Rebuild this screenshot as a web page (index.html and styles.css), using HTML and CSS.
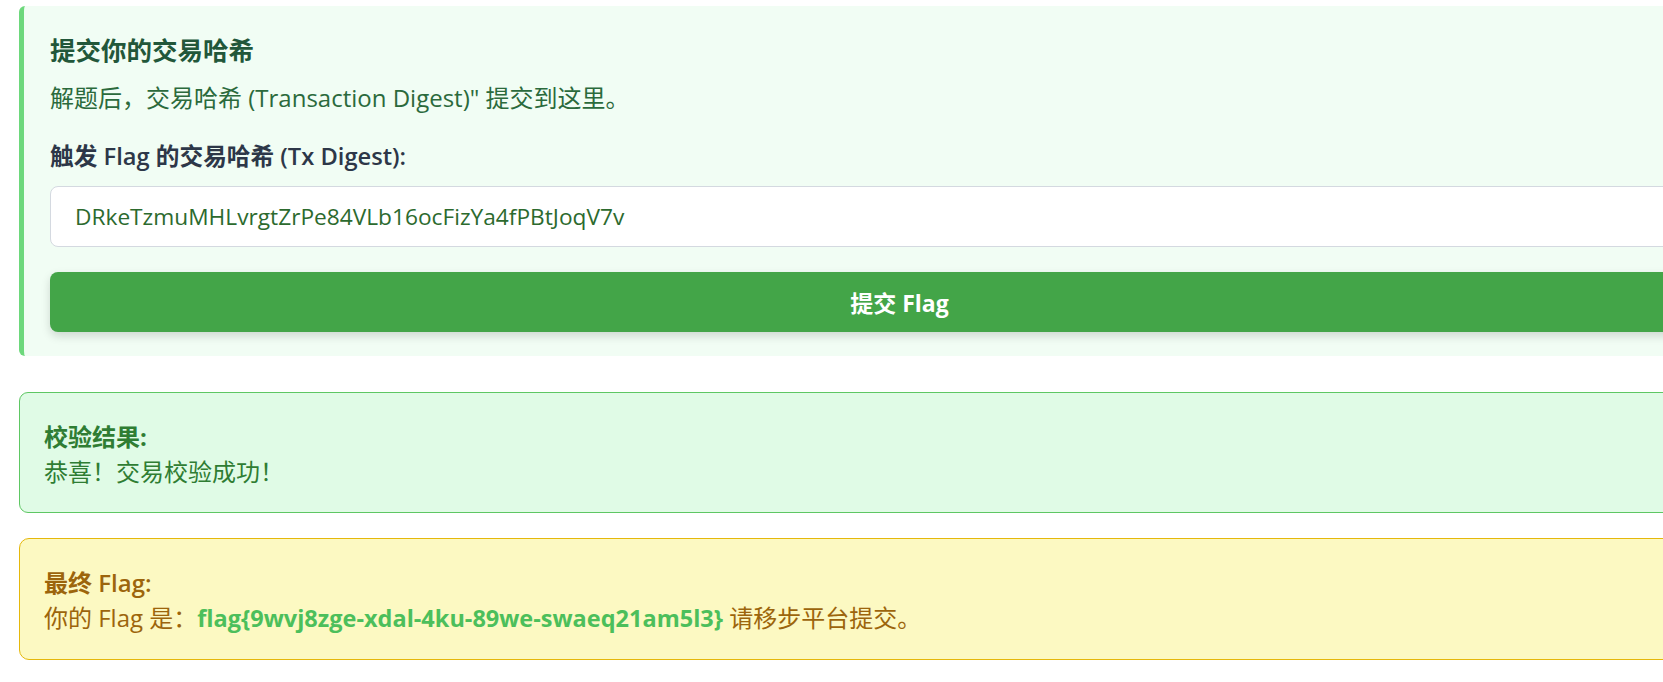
FILE: index.html
```html
<!DOCTYPE html>
<html lang="zh-CN">
<head>
<meta charset="utf-8">
<title>提交 Flag</title>
<link rel="stylesheet" href="styles.css">
</head>
<body>
<div class="page">
  <section class="submit-card">
    <h3 class="submit-title">提交你的交易哈希</h3>
    <p class="submit-desc">解题后，交易哈希 (Transaction Digest)" 提交到这里。</p>
    <label class="field-label" for="tx">触发 Flag 的交易哈希 (Tx Digest):</label>
    <input class="field-input" id="tx" type="text" value="DRkeTzmuMHLvrgtZrPe84VLb16ocFizYa4fPBtJoqV7v">
    <button class="submit-btn" type="button">提交 Flag</button>
  </section>

  <div class="result-box">
    <strong class="result-title">校验结果:</strong><br>
    <span>恭喜！交易校验成功！</span>
  </div>

  <div class="flag-box">
    <strong class="flag-title">最终 Flag:</strong><br>
    <span>你的 Flag 是：<strong class="flag-value">flag{9wvj8zge-xdal-4ku-89we-swaeq21am5l3}</strong> 请移步平台提交。</span>
  </div>
</div>
</body>
</html>
```

FILE: styles.css
```css
html, body {
  margin: 0;
  padding: 0;
  background: #ffffff;
  overflow: hidden;
}

body {
  font-family: "Open Sans", "Noto Sans CJK SC", sans-serif;
}

.page {
  width: 1756px;
  padding: 6px 0 0 19px;
  display: flex;
  flex-direction: column;
}

.submit-card {
  background: #f1fdf4;
  border-left: 5px solid #6dd87c;
  border-radius: 6px;
  padding: 29px 26px 24px 26px;
  display: flex;
  flex-direction: column;
}

.submit-title {
  margin: 0;
  font-size: 25.5px;
  line-height: 30px;
  font-weight: 700;
  color: #22573a;
}

.submit-desc {
  margin: 18px 0 0;
  font-size: 24px;
  line-height: 30px;
  color: #2b6a3c;
}

.field-label {
  margin-top: 28px;
  font-size: 23.7px;
  line-height: 30px;
  font-weight: 600;
  color: #2d3748;
}

.field-input {
  margin-top: 15px;
  height: 61px;
  box-sizing: border-box;
  border: 1px solid #d4d9e0;
  border-radius: 8px;
  background: #ffffff;
  padding: 0 24px;
  font-family: "Open Sans", "Noto Sans CJK SC", sans-serif;
  font-size: 22.7px;
  color: #2c6a2e;
  outline: none;
}

.submit-btn {
  margin-top: 25px;
  height: 60px;
  border: none;
  border-radius: 8px;
  background: #43a548;
  color: #ffffff;
  font-family: "Open Sans", "Noto Sans CJK SC", sans-serif;
  font-size: 23px;
  font-weight: 700;
  box-shadow: 0 4px 10px rgba(0, 0, 0, 0.15);
  cursor: pointer;
}

.result-box {
  margin-top: 36px;
  background: #e0fbe6;
  border: 1px solid #5ec763;
  border-radius: 9px;
  padding: 26px 24px 23px;
  font-size: 24px;
  line-height: 35px;
  color: #2f7d33;
}

.result-title {
  font-weight: 700;
}

.flag-box {
  margin-top: 25px;
  background: #fcf9c2;
  border: 1px solid #e5b80b;
  border-radius: 10px;
  padding: 26px 24px 23px;
  font-size: 24px;
  line-height: 35px;
  color: #9c650c;
}

.flag-title {
  font-weight: 600;
}

.flag-value {
  color: #4cbf5b;
  font-weight: 700;
  font-size: 23.5px;
}
```
